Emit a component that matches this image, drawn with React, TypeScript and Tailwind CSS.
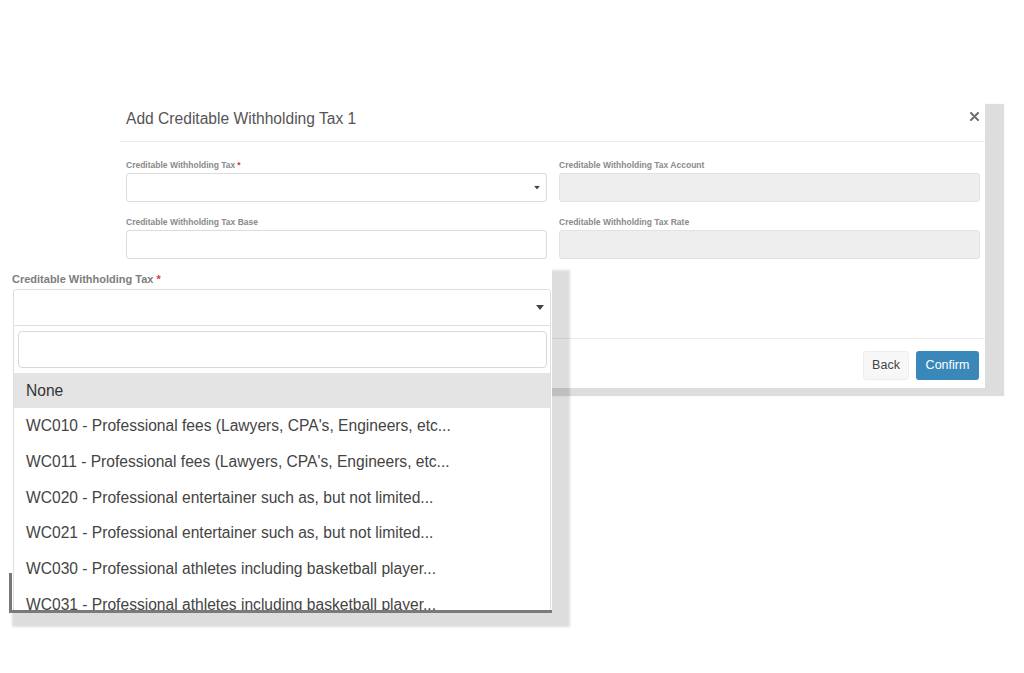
import React from 'react';

const FONT = { fontFamily: '"Liberation Sans", Arial, sans-serif' };

const OPTIONS = [
  "WC010 - Professional fees (Lawyers, CPA's, Engineers, etc...",
  "WC011 - Professional fees (Lawyers, CPA's, Engineers, etc...",
  'WC020 - Professional entertainer such as, but not limited...',
  'WC021 - Professional entertainer such as, but not limited...',
  'WC030 - Professional athletes including basketball player...',
  'WC031 - Professional athletes including basketball player...',
];

function Caret({ className }: { className?: string }) {
  return (
    <svg className={className} width="8" height="5" viewBox="0 0 8 5">
      <path d="M0 0 L8 0 L4 5 Z" fill="#444" />
    </svg>
  );
}

function Field({ label, required, disabled, select }: { label: string; required?: boolean; disabled?: boolean; select?: boolean }) {
  return (
    <div className="flex flex-col">
      <div className="h-[14px] leading-[14px] text-[8.5px] font-bold text-[#8a8a8a] mb-[1px]">
        {label}
        {required && <span className="text-[#d9363e] ml-[2px]">*</span>}
      </div>
      <div
        className={`h-[29px] rounded-[3px] border flex items-center justify-end pr-[5px] ${
          disabled ? 'bg-[#eeeeee] border-[#e2e2e2]' : 'bg-white border-[#dcdcdc]'
        }`}
      >
        {select && <Caret className="scale-75" />}
      </div>
    </div>
  );
}

export default function App() {
  return (
    <div className="relative w-[1024px] h-[673px] bg-white overflow-hidden" style={FONT}>
      {/* modal */}
      <div className="pt-[96px] pl-[120px]">
        <div className="w-[865px] bg-white shadow-[19px_8px_1px_rgba(0,0,0,0.135)]">
          <div className="h-[46px] border-b border-[#ececec] flex items-center justify-between pl-[6px] pr-[6px]">
            <span className="text-[15.6px] text-[#555]">Add Creditable Withholding Tax 1</span>
            <svg width="9" height="9" viewBox="0 0 9 9" className="-mt-[4px]">
              <path d="M1 1 L8 8 M8 1 L1 8" stroke="#6f6f6f" strokeWidth="2" strokeLinecap="round" />
            </svg>
          </div>
          <div className="h-[196px] pt-[16px] pl-[6px] pr-[5px] grid grid-cols-2 gap-x-[12px] gap-y-[13px] content-start">
            <Field label="Creditable Withholding Tax" required select />
            <Field label="Creditable Withholding Tax Account" disabled />
            <Field label="Creditable Withholding Tax Base" />
            <Field label="Creditable Withholding Tax Rate" disabled />
          </div>
          <div className="h-[50px] border-t border-[#ececec] flex justify-end items-start pt-[12px] pr-[6px] gap-[7px]">
            <button className="h-[29px] w-[46px] rounded-[3px] bg-[#f7f7f7] border border-[#ededed] text-[12.5px] text-[#444]">
              Back
            </button>
            <button className="h-[29px] w-[63px] rounded-[3px] bg-[#3a87b9] text-[12.5px] text-white">
              Confirm
            </button>
          </div>
        </div>
      </div>

      {/* zoomed dropdown shadow */}
      <div className="absolute left-[12px] top-[270px] w-[558px] h-[357px] bg-black/[0.135] blur-[1px]" />

      {/* zoomed dropdown */}
      <div className="absolute left-[10px] top-[264px] w-[542px] h-[349px] bg-white overflow-hidden">
        <div className="pl-[2px] pt-[8px] h-[22px] leading-[14px] text-[11px] font-bold text-[#7d7d7d]">
          Creditable Withholding Tax<span className="text-[#d9363e] ml-[3px]">*</span>
        </div>
        <div className="ml-[3px] mt-[3px] w-[538px]">
          <div className="h-[37px] border border-[#dedede] rounded-t-[3px] flex items-center justify-end pr-[6px]">
            <Caret />
          </div>
          <div className="h-[284px] border-x border-[#dedede] overflow-hidden">
            <div className="pt-[5px] pl-[4px] pr-[3px] pb-[5px]">
              <div className="h-[37px] border border-[#d8d8d8] rounded-[4px]" />
            </div>
            <div className="h-[35px] bg-[#e4e4e4] flex items-center pl-[12px] text-[15.6px] text-[#333]">None</div>
            {OPTIONS.map((o) => (
              <div key={o} className="h-[35.7px] flex items-center pl-[12px] text-[15.6px] text-[#444] whitespace-nowrap">
                {o}
              </div>
            ))}
          </div>
        </div>
      </div>

      {/* dark edge under the dropdown */}
      <div className="absolute left-[9px] top-[573px] w-[3px] h-[40px] bg-[#777]" />
      <div className="absolute left-[9px] top-[610px] w-[543px] h-[3px] bg-[#7a7a7a]" />
    </div>
  );
}
